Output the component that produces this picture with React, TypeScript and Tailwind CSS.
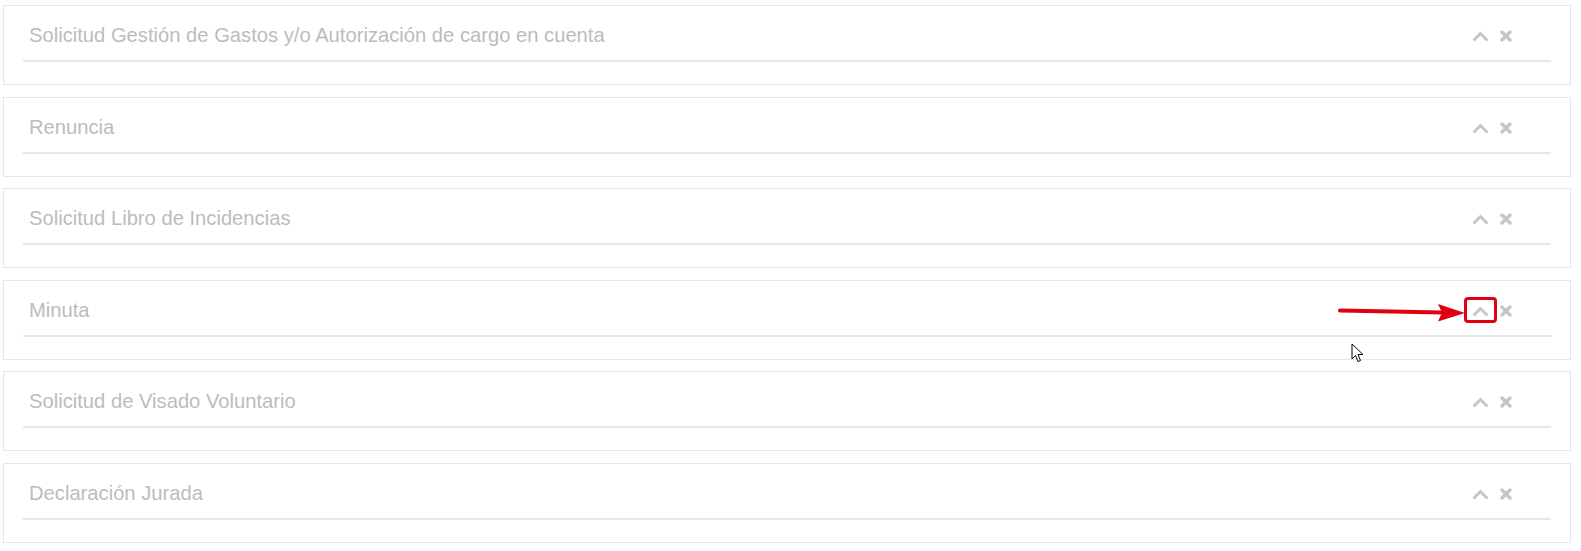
import React from "react";

const panels = [
  "Solicitud Gestión de Gastos y/o Autorización de cargo en cuenta",
  "Renuncia",
  "Solicitud Libro de Incidencias",
  "Minuta",
  "Solicitud de Visado Voluntario",
  "Declaración Jurada",
];

const ChevronUp = () => (
  <svg width="15" height="10" viewBox="0 0 15 10" className="block">
    <path d="M1.5 8.5 L7.5 2.5 L13.5 8.5" fill="none" stroke="#c3c6ca" strokeWidth="3" strokeLinecap="square" />
  </svg>
);

const Times = () => (
  <svg width="12" height="12" viewBox="0 0 12 12" className="block">
    <path d="M2 2 L10 10 M10 2 L2 10" fill="none" stroke="#c3c6ca" strokeWidth="3.4" strokeLinecap="round" />
  </svg>
);

const Panel = ({ title, marked }: { title: string; marked?: boolean }) => (
  <div className="relative h-[80px] border border-[#e6e6e8] bg-white">
    <div className="mx-[19px] flex h-[56px] items-start justify-between border-b-2 border-[#e4e7eb] pl-[6px] pr-[39px] pt-[18px]">
      <span className="text-[20.2px] leading-[23px] text-[#bcbcbc]">{title}</span>
      <div className="flex items-center gap-[12px] pt-[6px]">
        <div className="relative">
          <ChevronUp />
          {marked && (
            <div className="absolute -left-[9px] -top-[9px] h-[26px] w-[33px] rounded-[4px] border-[3.5px] border-[#e0000f]" />
          )}
        </div>
        <Times />
      </div>
    </div>
    {marked && (
      <>
        {/* red arrow pointing at the collapse button */}
        <svg className="absolute left-[1332px] top-[21px]" width="132" height="22" viewBox="0 0 132 22">
          <path d="M4 8.5 L106 10.5" stroke="#e0000f" strokeWidth="4" strokeLinecap="round" />
          <path d="M102 2 L129 11 L102 19.5 L106 10.5 Z" fill="#e0000f" />
        </svg>
        {/* mouse cursor */}
        <svg className="absolute left-[1347px] top-[62px]" width="14" height="20" viewBox="0 0 14 20">
          <path d="M1 1 L1 16 L4.5 12.5 L7 18.5 L9.5 17.5 L7 11.5 L12 11.5 Z" fill="#fff" stroke="#000" strokeWidth="1" strokeLinejoin="round" />
        </svg>
      </>
    )}
  </div>
);

export default function App() {
  return (
    <div className="min-h-[551px] w-[1581px] bg-white px-[3px] pt-[5px] font-['Liberation_Sans',Arial,sans-serif]">
      <div className="flex w-[1568px] flex-col gap-[11.6px]">
        {panels.map((p) => (
          <Panel key={p} title={p} marked={p === "Minuta"} />
        ))}
      </div>
    </div>
  );
}
